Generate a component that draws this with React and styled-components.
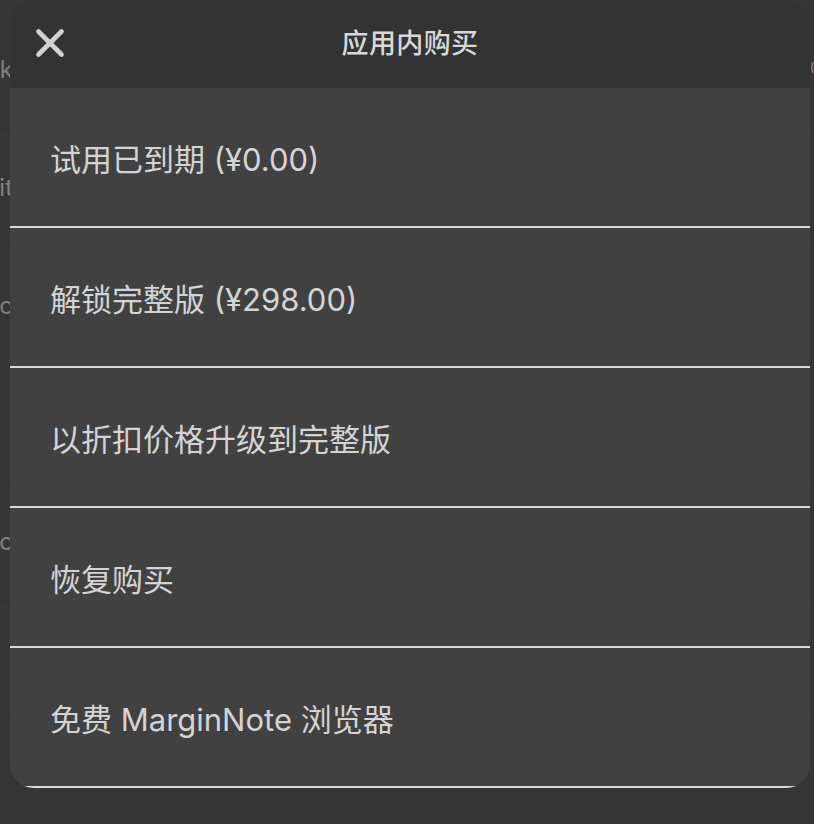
import React from 'react';
import styled, { createGlobalStyle } from 'styled-components';

const GlobalStyle = createGlobalStyle`
  html, body {
    margin: 0;
    padding: 0;
    background: #353535;
  }
  body {
    font-family: Inter, "Noto Sans CJK SC", sans-serif;
  }
`;

const Page = styled.div`
  position: relative;
  width: 814px;
  height: 824px;
  overflow: hidden;
  background: #353535;
`;

const BackList = styled.div`
  display: flex;
  flex-direction: column;
  padding-top: 11px;
`;

const BackRow = styled.div`
  height: 117px;
  display: flex;
  align-items: center;
  justify-content: space-between;
  border-bottom: 1px solid #313131;
`;

const BackLabel = styled.div`
  width: 13px;
  display: flex;
  justify-content: flex-end;
  white-space: nowrap;
  font-size: 24px;
  color: #808080;
`;

const BackSide = styled.div`
  width: 4px;
  display: flex;
  justify-content: flex-start;
  white-space: nowrap;
  font-size: 12px;
  color: #9a9a9a;
  margin-top: -6px;
`;

const Sheet = styled.div`
  position: absolute;
  top: 0;
  left: 10px;
  width: 800px;
  height: 788px;
  border-radius: 24px;
  overflow: hidden;
  background: #414141;
  display: flex;
  flex-direction: column;
`;

const Header = styled.div`
  height: 88px;
  flex-shrink: 0;
  background: #333333;
  display: grid;
  grid-template-columns: 1fr auto 1fr;
  align-items: center;
`;

const CloseButton = styled.button`
  justify-self: start;
  margin-left: 24px;
  margin-top: -2px;
  width: 32px;
  height: 32px;
  padding: 0;
  border: none;
  background: none;
  display: flex;
  align-items: center;
  justify-content: center;
  color: #d2d2d2;
  cursor: pointer;
`;

const Title = styled.h1`
  margin: -5px 0 0;
  font-size: 27px;
  font-weight: 500;
  color: #d8d8d8;
  letter-spacing: 0.4px;
`;

const Item = styled.div`
  height: 138px;
  flex-shrink: 0;
  display: flex;
  align-items: center;
  padding-left: 40px;
  border-bottom: 2px solid #dadada;
  font-size: 31px;
  color: #d4d4d4;
  white-space: pre;
`;

const items = [
  '试用已到期 (¥0.00)',
  '解锁完整版 (¥298.00)',
  '以折扣价格升级到完整版',
  '恢复购买',
  '免费 MarginNote 浏览器',
];

const backRows = ['Link', 'Edit', 'Sync', '', 'Doc', ''];

const CloseIcon = () => (
  <svg width="30" height="30" viewBox="0 0 30 30">
    <path
      d="M3.5 3.5 L26.5 26.5 M26.5 3.5 L3.5 26.5"
      stroke="currentColor"
      strokeWidth="4.6"
      strokeLinecap="round"
    />
  </svg>
);

export default function App() {
  return (
    <Page>
      <GlobalStyle />
      <BackList>
        {backRows.map((label, i) => (
          <BackRow key={i}>
            <BackLabel>{label}</BackLabel>
            <BackSide>{i === 0 ? '()' : ''}</BackSide>
          </BackRow>
        ))}
      </BackList>

      <Sheet>
        <Header>
          <CloseButton aria-label="关闭">
            <CloseIcon />
          </CloseButton>
          <Title>应用内购买</Title>
          <span />
        </Header>
        {items.map((text) => (
          <Item key={text}>{text}</Item>
        ))}
      </Sheet>
    </Page>
  );
}
